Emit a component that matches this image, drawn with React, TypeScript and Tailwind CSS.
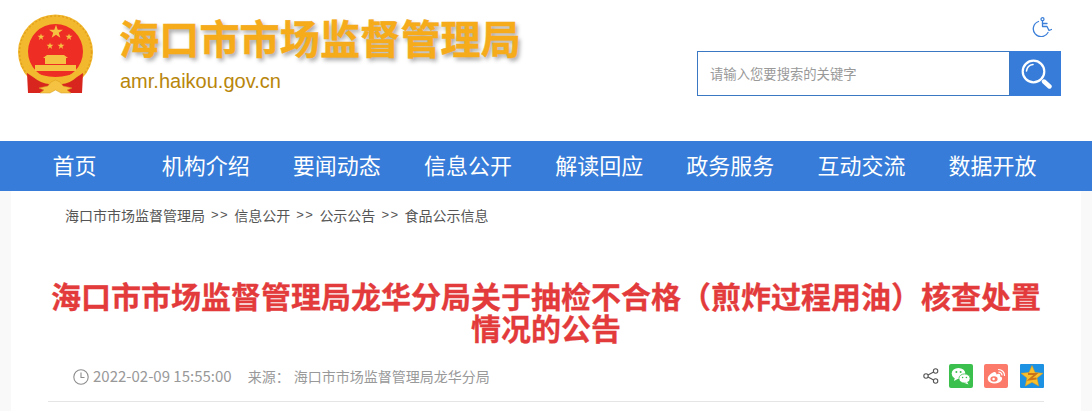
const navItems = ["首页", "机构介绍", "要闻动态", "信息公开", "解读回应", "政务服务", "互动交流", "数据开放"];

const crumbs = ["信息公开", "公示公告", "食品公示信息"];

const cjk = "font-['Microsoft_YaHei','Noto_Sans_CJK_SC','Noto_Sans',sans-serif]";

function Emblem() {
  const star = "M0,-5 L1.2,-1.6 L4.8,-1.6 L1.9,0.6 L3,4 L0,1.9 L-3,4 L-1.9,0.6 L-4.8,-1.6 L-1.2,-1.6 Z";
  return (
    <svg width="78" height="80" viewBox="0 0 78 80" className="shrink-0">
      <circle cx="38.500" cy="38" r="37.500" fill="#f2b92f" />
      <circle cx="38.500" cy="38" r="36" fill="none" stroke="#e3a11d" strokeWidth="1.500" strokeDasharray="2 2" />
      <circle cx="38.500" cy="37.500" r="27.500" fill="#ee2d24" />
      <g fill="#f5c242">
        <path d={star} transform="translate(39,18) scale(1.45)" />
        <path d={star} transform="translate(24,23) scale(0.72)" />
        <path d={star} transform="translate(52,23) scale(0.72)" />
        <path d={star} transform="translate(33,32) scale(0.72)" />
        <path d={star} transform="translate(44,32) scale(0.72)" />
        <path d="M26 44 L30 41 L47 41 L51 44 L49 44 L49 50 L28 50 L28 44 Z" />
        <rect x="18" y="51" width="41" height="6" />
      </g>
      <path d="M12 56 Q38.500 70 65 56 L62 62 Q38.500 74 15 62 Z" fill="#f2b92f" />
      <path d="M10 59 L16 63 Q25 70 32 70 L30 79 L11 79 Z" fill="#d8261f" />
      <path d="M66 59 L60 63 Q52 70 45 70 L47 79 L65 79 Z" fill="#d8261f" />
      <path d="M22 74 L31 72 L34 68 L38.500 66 L43 68 L46 72 L55 74 L50 76 L54 79 L44 79 L38.500 76 L33 79 L23 79 L27 76 Z" fill="#f5c242" stroke="#d99a1c" strokeWidth="0.500" />
    </svg>
  );
}

function WheelchairIcon() {
  return (
    <svg width="20" height="20" viewBox="0 0 20 20" fill="none" stroke="#3b7fd9" strokeWidth="1.300" strokeLinecap="round" strokeLinejoin="round">
      <circle cx="10.500" cy="2.200" r="1.500" />
      <path d="M10.500 3.700 L10.500 9.500 L15 9.500 L17 13.500 L19.500 12.500" />
      <path d="M10.500 6.500 L15 6.500" />
      <path d="M6.500 4.500 A7.800 7.800 0 1 0 16 15.500" />
    </svg>
  );
}

function SearchIcon() {
  return (
    <svg width="32" height="32" viewBox="0 0 32 32" fill="none" stroke="#fff" strokeLinecap="round">
      <circle cx="13.500" cy="13.500" r="10.800" strokeWidth="2.200" />
      <path d="M6.500 13 A7.500 7.500 0 0 1 13 6.500" strokeWidth="1.600" />
      <path d="M24 23.500 L29.500 28.500" strokeWidth="4.400" />
    </svg>
  );
}

function ClockIcon() {
  return (
    <svg width="16" height="16" viewBox="0 0 16 16" fill="none" stroke="#8c8c8c" strokeWidth="1.100" className="shrink-0">
      <circle cx="8" cy="8" r="7.200" />
      <path d="M8 3.500 L8 8.500 L11.500 8.500" />
    </svg>
  );
}

function ShareIcon() {
  return (
    <svg width="16" height="16" viewBox="0 0 16 16" fill="none" stroke="#555" strokeWidth="1.100">
      <circle cx="3" cy="8" r="2.200" />
      <circle cx="12.600" cy="3" r="2.200" />
      <circle cx="12.600" cy="13" r="2.200" />
      <path d="M5 7 L10.600 4 M5 9 L10.600 12" />
    </svg>
  );
}

function WechatIcon() {
  return (
    <svg width="24" height="24" viewBox="0 0 24 24">
      <rect width="24" height="24" rx="2" fill="#3cc04d" />
      <ellipse cx="9.500" cy="9.500" rx="6.800" ry="5.600" fill="#fff" />
      <path d="M6 13 L5 17 L9.500 14.500 Z" fill="#fff" />
      <ellipse cx="15.500" cy="14.500" rx="5.600" ry="4.600" fill="#fff" stroke="#3cc04d" strokeWidth="0.800" />
      <path d="M18 18 L19.500 20.500 L15.500 19 Z" fill="#fff" />
      <circle cx="7.400" cy="8" r="1" fill="#3cc04d" />
      <circle cx="11.600" cy="8" r="1" fill="#3cc04d" />
      <circle cx="13.600" cy="13.500" r="0.800" fill="#3cc04d" />
      <circle cx="17.400" cy="13.500" r="0.800" fill="#3cc04d" />
    </svg>
  );
}

function WeiboIcon() {
  return (
    <svg width="24" height="24" viewBox="0 0 24 24">
      <rect width="24" height="24" rx="2" fill="#fb7a6a" />
      <path d="M10 8 C6 9.500 3 13 4 16 C5 19.500 11 20.500 15 18.500 C19 16.500 19 13 16 12.500 C17 10 15 9 12.500 10.500 C12.500 8.500 11.500 7.700 10 8 Z" fill="#fff" />
      <ellipse cx="10" cy="15" rx="3.600" ry="2.800" fill="#fb7a6a" />
      <circle cx="9.600" cy="15" r="1.300" fill="#fff" />
      <path d="M14.500 5.500 A6 6 0 0 1 20.500 11.500 M14.800 8 A3.500 3.500 0 0 1 18 11" fill="none" stroke="#fff" strokeWidth="1.200" strokeLinecap="round" />
    </svg>
  );
}

function QzoneIcon() {
  return (
    <svg width="24" height="24" viewBox="0 0 24 24">
      <rect width="24" height="24" rx="1" fill="#1d92e3" />
      <path d="M12 1.500 L15 8.500 L23 9.300 L17 14 L18.700 22 L12 18.200 L5.300 22 L7 14 L1 9.300 L9 8.500 Z" fill="#f7c02c" stroke="#e29a17" strokeWidth="0.500" />
      <path d="M8 10 L16 10 L9.500 15.500 L16.500 14.500" fill="none" stroke="#c9741a" strokeWidth="1.800" />
    </svg>
  );
}

export default function App() {
  return (
    <div className={`h-[411px] w-[1092px] overflow-hidden bg-[#f9f9f9] ${cjk}`}>
      <header className="flex h-[141px] bg-white pl-[17px] pr-[31px]">
        <div className="flex items-start pt-[14px]">
          <Emblem />
          <div className="ml-[25px]">
            <h1 className="mt-px -ml-px text-[40px] leading-[44px] font-bold tracking-[0.2px] whitespace-nowrap text-[#f5ab1a] [-webkit-text-stroke:0.5px_#f5ab1a] [text-shadow:2px_3px_4px_rgba(0,0,0,0.35)]">
              海口市市场监督管理局
            </h1>
            <p className="mt-[10px] font-['Liberation_Sans',sans-serif] text-[20px] leading-6 text-[#b8860b]">amr.haikou.gov.cn</p>
          </div>
        </div>
        <div className="ml-auto flex flex-col items-end">
          <div className="mt-[17px] mr-[9px]">
            <WheelchairIcon />
          </div>
          <div className="mt-[14px] flex h-[45px] w-[364px]">
            <div className="flex flex-1 items-center border border-[#3b78c4] bg-white pl-[12px] text-[13.33px] text-[#999]">
              请输入您要搜索的关键字
            </div>
            <div className="flex w-[51px] items-center justify-center bg-[#367cd8]">
              <SearchIcon />
            </div>
          </div>
        </div>
      </header>

      <nav className="flex h-[50px] items-center bg-[#367cd8] pb-[3px] pl-[9px]">
        {navItems.map((item) => (
          <a key={item} className="w-[131.15px] text-center text-[22px] text-white">
            {item}
          </a>
        ))}
      </nav>

      <main className="mx-[11px] h-[220px] bg-white px-[37px]">
        <div className="flex h-[50px] items-center pb-[2px] pl-[17px] text-[14px] text-[#555]">
          <span>海口市市场监督管理局</span>
          {crumbs.map((c) => (
            <span key={c} className="ml-[6px] flex items-center">
              <span className="font-['Liberation_Sans',sans-serif] text-[13px] tracking-[1.500px]">&gt;&gt;</span>
              <span className="ml-[5px]">{c}</span>
            </span>
          ))}
        </div>
        <h2 className="mt-[38px] text-center text-[30px] leading-[32px] font-bold text-[#e33b3b] [-webkit-text-stroke:0.3px_#e33b3b]">
          海口市市场监督管理局龙华分局关于抽检不合格（煎炸过程用油）核查处置情况的公告
        </h2>
        <div className="mt-[21px] flex h-[38px] items-start border-b border-[#e5e5e5] pl-[25px] text-[14px] leading-6 text-[#999]">
          <span className="mt-[5px]">
            <ClockIcon />
          </span>
          <span className="ml-1 text-[15px]">2022-02-09 15:55:00</span>
          <span className="ml-[16px]">来源：</span>
          <span className="ml-1">海口市市场监督管理局龙华分局</span>
          <div className="ml-auto flex items-center">
            <ShareIcon />
            <div className="ml-[10px]"><WechatIcon /></div>
            <div className="ml-[11px]"><WeiboIcon /></div>
            <div className="ml-3"><QzoneIcon /></div>
          </div>
        </div>
      </main>
    </div>
  );
}
